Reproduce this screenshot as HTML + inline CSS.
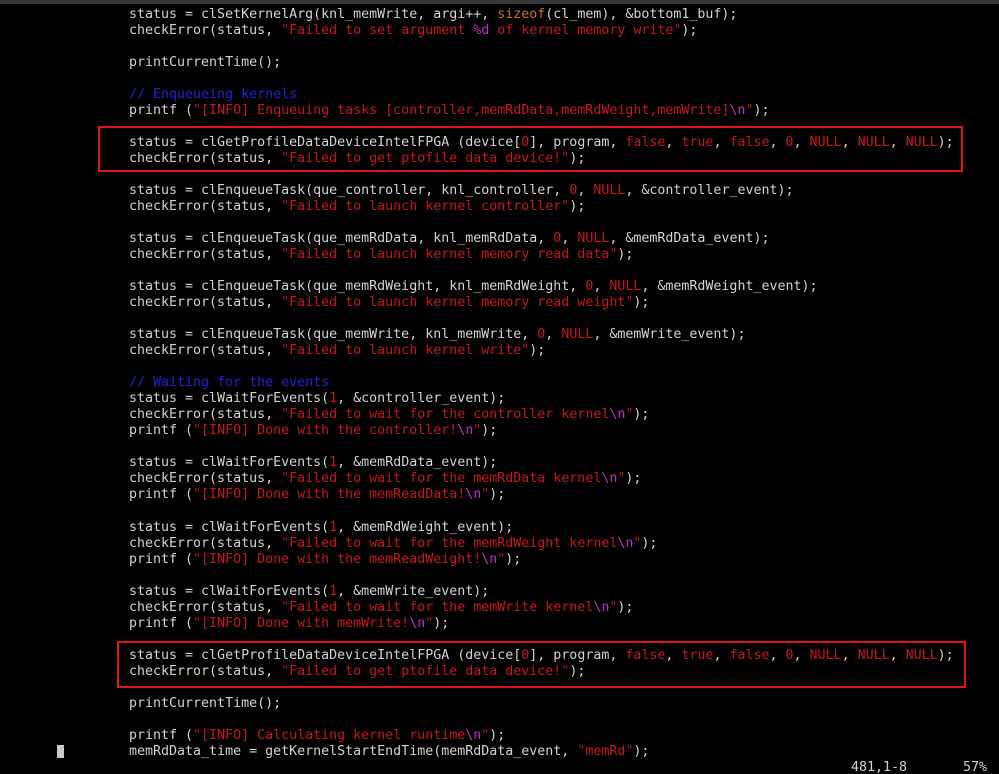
<!DOCTYPE html>
<html><head><meta charset="utf-8"><style>
html,body{margin:0;padding:0;background:#000;width:999px;height:774px;overflow:hidden;position:relative}
#bar{position:absolute;left:0;top:0;width:999px;height:4px;background:#3a3a3a}
pre{position:absolute;left:129px;top:7px;margin:0;font-family:"DejaVu Sans Mono","Liberation Mono",monospace;font-size:13.3px;line-height:16.02px;color:#d2d2d2;white-space:pre}
.s{color:#c8161d}.c{color:#2020d8}.m{color:#c030c8}.k{color:#c8702a}
.box{position:absolute;border:2px solid #e0141a;box-sizing:border-box}
#cur{position:absolute;left:57px;top:745px;width:7px;height:13px;background:#c8c8c8}
.st{position:absolute;top:760px;font-family:"DejaVu Sans Mono","Liberation Mono",monospace;font-size:13.3px;line-height:16px;color:#d2d2d2;white-space:pre}
</style></head><body>
<div id="bar"></div>
<pre>status = clSetKernelArg(knl_memWrite, argi++, <span class="k">sizeof</span>(cl_mem), &amp;bottom1_buf);
checkError(status, <span class="s">"Failed to set argument </span><span class="m">%d</span><span class="s"> of kernel memory write"</span>);

printCurrentTime();

<span class="c">// Enqueueing kernels</span>
printf (<span class="s">"[INFO] Enqueuing tasks [controller,memRdData,memRdWeight,memWrite]</span><span class="m">\n</span><span class="s">"</span>);

status = clGetProfileDataDeviceIntelFPGA (device[<span class="s">0</span>], program, <span class="s">false</span>, <span class="s">true</span>, <span class="s">false</span>, <span class="s">0</span>, <span class="s">NULL</span>, <span class="s">NULL</span>, <span class="s">NULL</span>);
checkError(status, <span class="s">"Failed to get ptofile data device!"</span>);

status = clEnqueueTask(que_controller, knl_controller, <span class="s">0</span>, <span class="s">NULL</span>, &amp;controller_event);
checkError(status, <span class="s">"Failed to launch kernel controller"</span>);

status = clEnqueueTask(que_memRdData, knl_memRdData, <span class="s">0</span>, <span class="s">NULL</span>, &amp;memRdData_event);
checkError(status, <span class="s">"Failed to launch kernel memory read data"</span>);

status = clEnqueueTask(que_memRdWeight, knl_memRdWeight, <span class="s">0</span>, <span class="s">NULL</span>, &amp;memRdWeight_event);
checkError(status, <span class="s">"Failed to launch kernel memory read weight"</span>);

status = clEnqueueTask(que_memWrite, knl_memWrite, <span class="s">0</span>, <span class="s">NULL</span>, &amp;memWrite_event);
checkError(status, <span class="s">"Failed to launch kernel write"</span>);

<span class="c">// Waiting for the events</span>
status = clWaitForEvents(<span class="s">1</span>, &amp;controller_event);
checkError(status, <span class="s">"Failed to wait for the controller kernel</span><span class="m">\n</span><span class="s">"</span>);
printf (<span class="s">"[INFO] Done with the controller!</span><span class="m">\n</span><span class="s">"</span>);

status = clWaitForEvents(<span class="s">1</span>, &amp;memRdData_event);
checkError(status, <span class="s">"Failed to wait for the memRdData kernel</span><span class="m">\n</span><span class="s">"</span>);
printf (<span class="s">"[INFO] Done with the memReadData!</span><span class="m">\n</span><span class="s">"</span>);

status = clWaitForEvents(<span class="s">1</span>, &amp;memRdWeight_event);
checkError(status, <span class="s">"Failed to wait for the memRdWeight kernel</span><span class="m">\n</span><span class="s">"</span>);
printf (<span class="s">"[INFO] Done with the memReadWeight!</span><span class="m">\n</span><span class="s">"</span>);

status = clWaitForEvents(<span class="s">1</span>, &amp;memWrite_event);
checkError(status, <span class="s">"Failed to wait for the memWrite kernel</span><span class="m">\n</span><span class="s">"</span>);
printf (<span class="s">"[INFO] Done with memWrite!</span><span class="m">\n</span><span class="s">"</span>);

status = clGetProfileDataDeviceIntelFPGA (device[<span class="s">0</span>], program, <span class="s">false</span>, <span class="s">true</span>, <span class="s">false</span>, <span class="s">0</span>, <span class="s">NULL</span>, <span class="s">NULL</span>, <span class="s">NULL</span>);
checkError(status, <span class="s">"Failed to get ptofile data device!"</span>);

printCurrentTime();

printf (<span class="s">"[INFO] Calculating kernel runtime</span><span class="m">\n</span><span class="s">"</span>);
memRdData_time = getKernelStartEndTime(memRdData_event, <span class="s">"memRd"</span>);</pre>
<div class="box" style="left:98px;top:126px;width:865px;height:46px"></div>
<div class="box" style="left:117px;top:641px;width:849px;height:47px"></div>
<div id="cur"></div>
<div class="st" style="left:851px">481,1-8</div>
<div class="st" style="left:963px">57%</div>
</body></html>
